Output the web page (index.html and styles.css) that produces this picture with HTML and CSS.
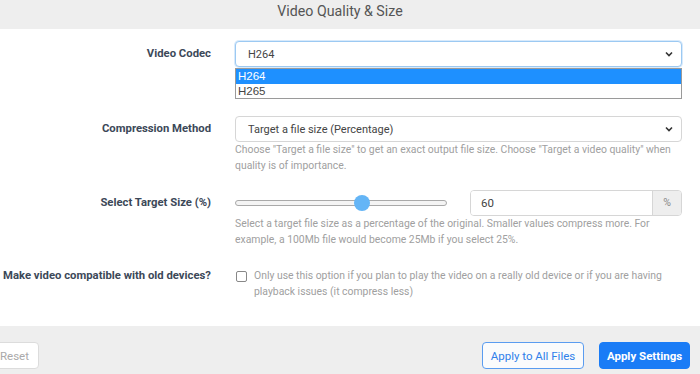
FILE: index.html
```html
<!DOCTYPE html>
<html>
<head>
<meta charset="utf-8">
<link rel="stylesheet" href="styles.css">
</head>
<body>
<div class="panel">
  <div class="header">Video Quality &amp; Size</div>
  <div class="form">
    <div class="row row-codec">
      <div class="label">Video Codec</div>
      <div class="control">
        <div class="select focused">
          <span>H264</span>
          <svg class="chev" width="8" height="6" viewBox="0 0 8 6"><path d="M1 1.5 L4 4.5 L7 1.5" fill="none" stroke="#333" stroke-width="1.6"/></svg>
        </div>
        <div class="dropdown">
          <div class="opt active">H264</div>
          <div class="opt">H265</div>
        </div>
      </div>
    </div>
    <div class="row row-method">
      <div class="label">Compression Method</div>
      <div class="control">
        <div class="select">
          <span>Target a file size (Percentage)</span>
          <svg class="chev" width="8" height="6" viewBox="0 0 8 6"><path d="M1 1.5 L4 4.5 L7 1.5" fill="none" stroke="#333" stroke-width="1.6"/></svg>
        </div>
        <div class="help">Choose "Target a file size" to get an exact output file size. Choose "Target a video quality" when quality is of importance.</div>
      </div>
    </div>
    <div class="row row-size">
      <div class="label">Select Target Size (%)</div>
      <div class="control">
        <div class="size-line">
          <div class="slider">
            <div class="track"></div>
            <div class="thumb" style="left: 60%"></div>
          </div>
          <div class="input-group">
            <div class="input">60</div>
            <div class="addon">%</div>
          </div>
        </div>
        <div class="help">Select a target file size as a percentage of the original. Smaller values compress more. For example, a 100Mb file would become 25Mb if you select 25%.</div>
      </div>
    </div>
    <div class="row row-compat">
      <div class="label">Make video compatible with old devices?</div>
      <div class="control">
        <div class="check-line">
          <span class="checkbox"></span>
          <div class="help check-text">Only use this option if you plan to play the video on a really old device or if you are having playback issues (it compress less)</div>
        </div>
      </div>
    </div>
  </div>
  <div class="footer">
    <button class="btn btn-reset">Reset</button>
    <div class="right-btns">
      <button class="btn btn-outline">Apply to All Files</button>
      <button class="btn btn-primary">Apply Settings</button>
    </div>
  </div>
</div>
</body>
</html>
```

FILE: styles.css
```css
html, body {
  margin: 0;
  padding: 0;
  background: #fff;
  overflow: hidden;
}
body {
  font-family: Roboto, "Liberation Sans", sans-serif;
  color: #333;
}
.panel {
  width: 720px;
  margin-left: -20px;
}
.header {
  height: 29px;
  box-sizing: border-box;
  padding-top: 2px;
  background: #eeeeee;
  text-align: center;
  font-size: 14.2px;
  line-height: 18px;
  color: #555;
}
.form {
  padding-top: 12px;
}
.row {
  display: grid;
  grid-template-columns: 231px 447px;
  column-gap: 24px;
  align-items: start;
}
.label {
  text-align: right;
  font-weight: 700;
  font-size: 11.3px;
  line-height: 26px;
  color: #3c4858;
  white-space: nowrap;
}
.control {
  position: relative;
}
.select {
  height: 26px;
  box-sizing: border-box;
  border: 1px solid #d6d6d6;
  border-radius: 4px;
  background: #fff;
  display: flex;
  align-items: center;
  justify-content: space-between;
  padding: 0 8px 0 12px;
  font-size: 11px;
  color: #444;
}
.select.focused {
  border-color: #9cc9f2;
  box-shadow: 0 0 0 1px #d8eafb;
}
.chev {
  display: block;
}
.dropdown {
  position: absolute;
  left: 0;
  right: 0;
  top: 27px;
  border: 1px solid #9a9a9a;
  background: #fff;
  font-family: "Liberation Sans", Arial, sans-serif;
  font-size: 11.5px;
  z-index: 5;
}
.opt {
  height: 14.5px;
  line-height: 14.5px;
  padding-left: 2px;
  color: #444;
}
.opt.active {
  background: #1e90ff;
  color: #fff;
}
.row-codec {
  margin-bottom: 49px;
}
.row-method {
  margin-bottom: 16px;
}
.row-size {
  margin-bottom: 20px;
}
.row-compat .label {
  line-height: 16px;
}
.help {
  font-size: 10.4px;
  line-height: 16px;
  color: #a0a0a0;
}
.size-line {
  display: flex;
  align-items: center;
  gap: 23px;
  height: 26px;
}
.slider {
  position: relative;
  width: 212px;
  height: 16px;
}
.track {
  position: absolute;
  left: 0;
  right: 0;
  top: 5px;
  height: 6px;
  box-sizing: border-box;
  border: 1px solid #a9a9a9;
  border-radius: 3px;
  background: #f4f4f4;
}
.thumb {
  position: absolute;
  top: 0;
  width: 16px;
  height: 16px;
  margin-left: -8px;
  border-radius: 50%;
  background: #64b5f6;
}
.input-group {
  flex: 1;
  display: flex;
  height: 26px;
  box-sizing: border-box;
  border: 1px solid #d6d6d6;
  border-radius: 4px;
  overflow: hidden;
}
.input {
  flex: 1;
  padding-left: 10px;
  font-size: 11.5px;
  line-height: 24px;
  color: #444;
  background: #fff;
}
.addon {
  width: 28px;
  border-left: 1px solid #d6d6d6;
  background: #eeeeee;
  text-align: center;
  font-size: 10.5px;
  line-height: 24px;
  color: #888;
}
.check-line {
  display: flex;
  align-items: flex-start;
  gap: 7px;
}
.checkbox {
  flex: none;
  width: 11px;
  height: 11px;
  box-sizing: border-box;
  border: 1px solid #888;
  border-radius: 2px;
  margin: 3px 0 0 1px;
  background: #fff;
}
.footer {
  margin-top: 26px;
  background: #eeeeee;
  height: 60px;
  box-sizing: border-box;
  padding: 16px 10px 0 10px;
  display: flex;
  justify-content: space-between;
  align-items: flex-start;
}
.right-btns {
  display: flex;
  gap: 15px;
}
.btn {
  font-family: Roboto, "Liberation Sans", sans-serif;
  height: 27px;
  box-sizing: border-box;
  border-radius: 4px;
  font-size: 11.5px;
  padding: 0;
  white-space: nowrap;
  text-align: center;
  cursor: pointer;
}
.btn-reset {
  background: #fff;
  border: 1px solid #dcdcdc;
  color: #aaa;
  width: 49px;
}
.btn-outline {
  background: #fafbfc;
  border: 1px solid #5a9cf0;
  color: #2f80ea;
  width: 102px;
}
.btn-primary {
  background: #1a7cf6;
  border: 1px solid #1a7cf6;
  color: #fff;
  font-weight: 700;
  width: 91px;
}
```
